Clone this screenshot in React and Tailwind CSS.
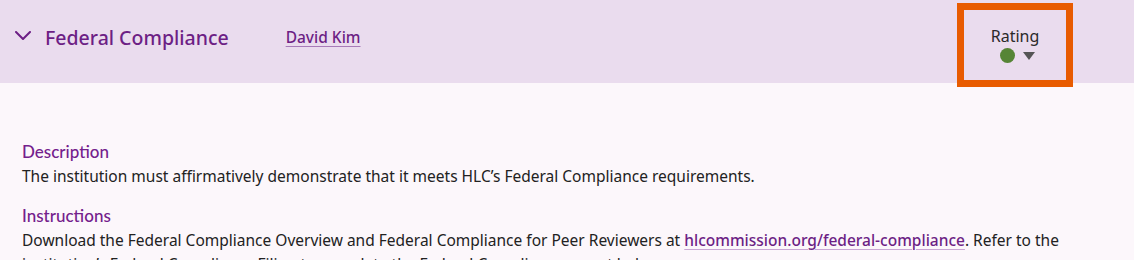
function RatingPicker() {
  return (
    <div className="relative z-10 mt-[3px] flex h-[84px] w-[116px] flex-col items-center justify-center border-[7px] border-[#e85b00] pb-[1px]">
      <span className="text-[16px] leading-5 text-[#2a2a2a]">Rating</span>
      <div className="mt-[2px] flex items-center gap-[8px] pl-[4px]">
        <span className="h-[15px] w-[15px] rounded-full bg-[#568536]" />
        <svg width="12" height="8" viewBox="0 0 12 8">
          <path d="M0 0 L12 0 L6 8 Z" fill="#555555" />
        </svg>
      </div>
    </div>
  )
}

function Section({title, children}) {
  return (
    <div className="mb-[16px]">
      <h3
        className="text-[17px] font-medium leading-6 text-[#74208c]"
        style={{fontFamily: 'Lato, "Noto Sans", sans-serif'}}
      >
        {title}
      </h3>
      <div className="text-[15.5px] leading-6 text-[#222222]">{children}</div>
    </div>
  )
}

export default function App() {
  return (
    <div
      className="h-[260px] w-[1134px] overflow-hidden bg-[#fcf7fb]"
      style={{fontFamily: '"Noto Sans", "Open Sans", sans-serif'}}
    >
      <div className="flex h-[83px] items-start bg-[#eadcee] pr-[61px]">
        <div className="flex h-[75px] flex-1 items-center pl-[15px]">
          <svg width="16" height="9" viewBox="0 0 16 9" className="mb-[4px]">
            <polyline
              points="1,1 8,8 15,1"
              fill="none"
              stroke="#6d1f85"
              strokeWidth="2"
              strokeLinecap="round"
              strokeLinejoin="round"
            />
          </svg>
          <h2 className="ml-[14px] text-[19.5px] font-medium text-[#6d1f85]">
            Federal Compliance
          </h2>
          <a
            href="#"
            className="ml-[57px] text-[15.5px] font-medium text-[#6d1f85] underline decoration-[#a77bb8] underline-offset-[3px]"
          >
            David Kim
          </a>
        </div>
        <RatingPicker />
      </div>
      <div className="px-[22px] pt-[57px]">
        <Section title="Description">
          The institution must affirmatively demonstrate that it meets HLC’s
          Federal Compliance requirements.
        </Section>
        <Section title="Instructions">
          Download the Federal Compliance Overview and Federal Compliance for
          Peer Reviewers at{' '}
          <a
            href="#"
            className="font-medium text-[#6d1f85] underline decoration-[#c9a6d4] underline-offset-[3px]"
          >
            hlcommission.org/federal-compliance
          </a>
          . Refer to the institution’s Federal Compliance Filing to complete the
          Federal Compliance report below.
        </Section>
      </div>
    </div>
  )
}
